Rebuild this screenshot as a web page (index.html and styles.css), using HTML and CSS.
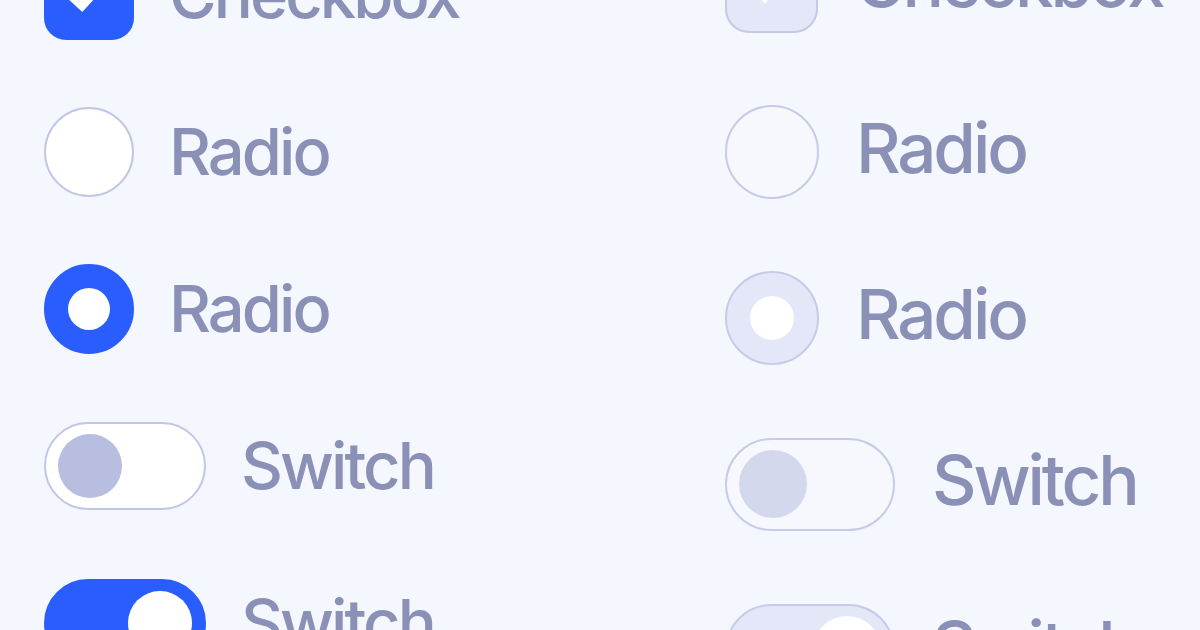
FILE: index.html
```html
<!DOCTYPE html>
<html>
<head>
<meta charset="utf-8">
<link rel="stylesheet" href="styles.css">
</head>
<body>
<div class="page">
  <div class="col col-normal">
    <div class="row">
      <span class="checkbox checked">
        <svg viewBox="0 0 90 90" class="check"><polyline points="24,42 38,55 67,23" /></svg>
      </span>
      <span class="label">Checkbox</span>
    </div>
    <div class="row">
      <span class="radio"></span>
      <span class="label">Radio</span>
    </div>
    <div class="row">
      <span class="radio checked"><span class="dot"></span></span>
      <span class="label">Radio</span>
    </div>
    <div class="row">
      <span class="switch"><span class="knob"></span></span>
      <span class="label">Switch</span>
    </div>
    <div class="row">
      <span class="switch on"><span class="knob"></span></span>
      <span class="label">Switch</span>
    </div>
  </div>
  <div class="col col-disabled">
    <div class="row">
      <span class="checkbox checked">
        <svg viewBox="0 0 90 90" class="check"><polyline points="24,42 38,55 67,23" /></svg>
      </span>
      <span class="label">Checkbox</span>
    </div>
    <div class="row">
      <span class="radio"></span>
      <span class="label">Radio</span>
    </div>
    <div class="row">
      <span class="radio checked"><span class="dot"></span></span>
      <span class="label">Radio</span>
    </div>
    <div class="row">
      <span class="switch"><span class="knob"></span></span>
      <span class="label">Switch</span>
    </div>
    <div class="row">
      <span class="switch on"><span class="knob"></span></span>
      <span class="label">Switch</span>
    </div>
  </div>
</div>
</body>
</html>
```

FILE: styles.css
```css
html, body {
  margin: 0;
  padding: 0;
  background: #f4f7fe;
  width: 1200px;
  height: 630px;
  overflow: hidden;
}

.page {
  display: flex;
  font-family: "Inter", "Noto Sans", sans-serif;
  color: #8a90b6;
}

.col {
  display: flex;
  flex-direction: column;
}

.row {
  display: flex;
  align-items: center;
}

.label {
  line-height: 1.2;
  font-weight: 500;
  letter-spacing: -0.045em;
  white-space: nowrap;
}

/* ---- normal column ---- */
.col-normal {
  width: 681px;
  padding-left: 44px;
  margin-top: -50px;
  gap: 67px;
}
.col-normal .row {
  height: 90px;
  gap: 35px;
}
.col-normal .label {
  font-size: 65px;
}
.col-normal .checkbox {
  width: 90px;
  height: 90px;
  border-radius: 22px;
}
.col-normal .radio {
  width: 90px;
  height: 90px;
}
.col-normal .radio .dot {
  width: 42px;
  height: 42px;
}
.col-normal .switch {
  width: 162px;
  height: 88px;
  padding: 0 12px;
}
.col-normal .switch .knob {
  width: 64px;
  height: 64px;
}

/* ---- disabled column ---- */
.col-disabled {
  margin-top: -61px;
  gap: 72px;
}
.col-disabled .row {
  height: 94px;
  gap: 37px;
}
.col-disabled .label {
  font-size: 69px;
  padding-bottom: 7px;
}
.col-disabled .checkbox {
  width: 93px;
  height: 93px;
  border-radius: 24px;
}
.col-disabled .radio {
  width: 94px;
  height: 94px;
}
.col-disabled .radio .dot {
  width: 44px;
  height: 44px;
}
.col-disabled .switch {
  width: 170px;
  height: 93px;
  padding: 0 12px;
}
.col-disabled .switch .knob {
  width: 68px;
  height: 68px;
}

/* ---- shared controls ---- */
.checkbox,
.radio,
.switch {
  box-sizing: border-box;
  flex: none;
  display: flex;
  align-items: center;
  justify-content: center;
}

.radio {
  border-radius: 50%;
  background: #ffffff;
  border: 2px solid #c2c6e5;
}
.radio .dot {
  border-radius: 50%;
  background: #ffffff;
}

.switch {
  border-radius: 999px;
  background: #ffffff;
  border: 2px solid #c2c6e5;
  justify-content: flex-start;
}
.switch .knob {
  border-radius: 50%;
  background: #b8bedf;
}
.switch.on {
  justify-content: flex-end;
}

.check {
  width: 100%;
  height: 100%;
  fill: none;
  stroke: #ffffff;
  stroke-width: 10;
  stroke-linejoin: miter;
  stroke-linecap: round;
}

/* normal checked */
.col-normal .checkbox.checked {
  background: #2a5dfd;
}
.col-normal .radio.checked {
  background: #2a5dfd;
  border-color: #2a5dfd;
}
.col-normal .switch.on {
  background: #2a5dfd;
  border-color: #2a5dfd;
}
.col-normal .switch.on .knob {
  background: #ffffff;
}

/* disabled */
.col-disabled .checkbox {
  background: #e3e7f8;
  border: 2.5px solid #c5c9e6;
}
.col-disabled .radio,
.col-disabled .switch {
  border-width: 2.5px;
  border-color: #c7cbe7;
  background: #f6f8fe;
}
.col-disabled .radio.checked {
  background: #e3e7f8;
}
.col-disabled .switch .knob {
  background: #d4d8ec;
}
.col-disabled .switch.on {
  background: #e3e7f8;
}
.col-disabled .switch.on .knob {
  background: #ffffff;
}
```
